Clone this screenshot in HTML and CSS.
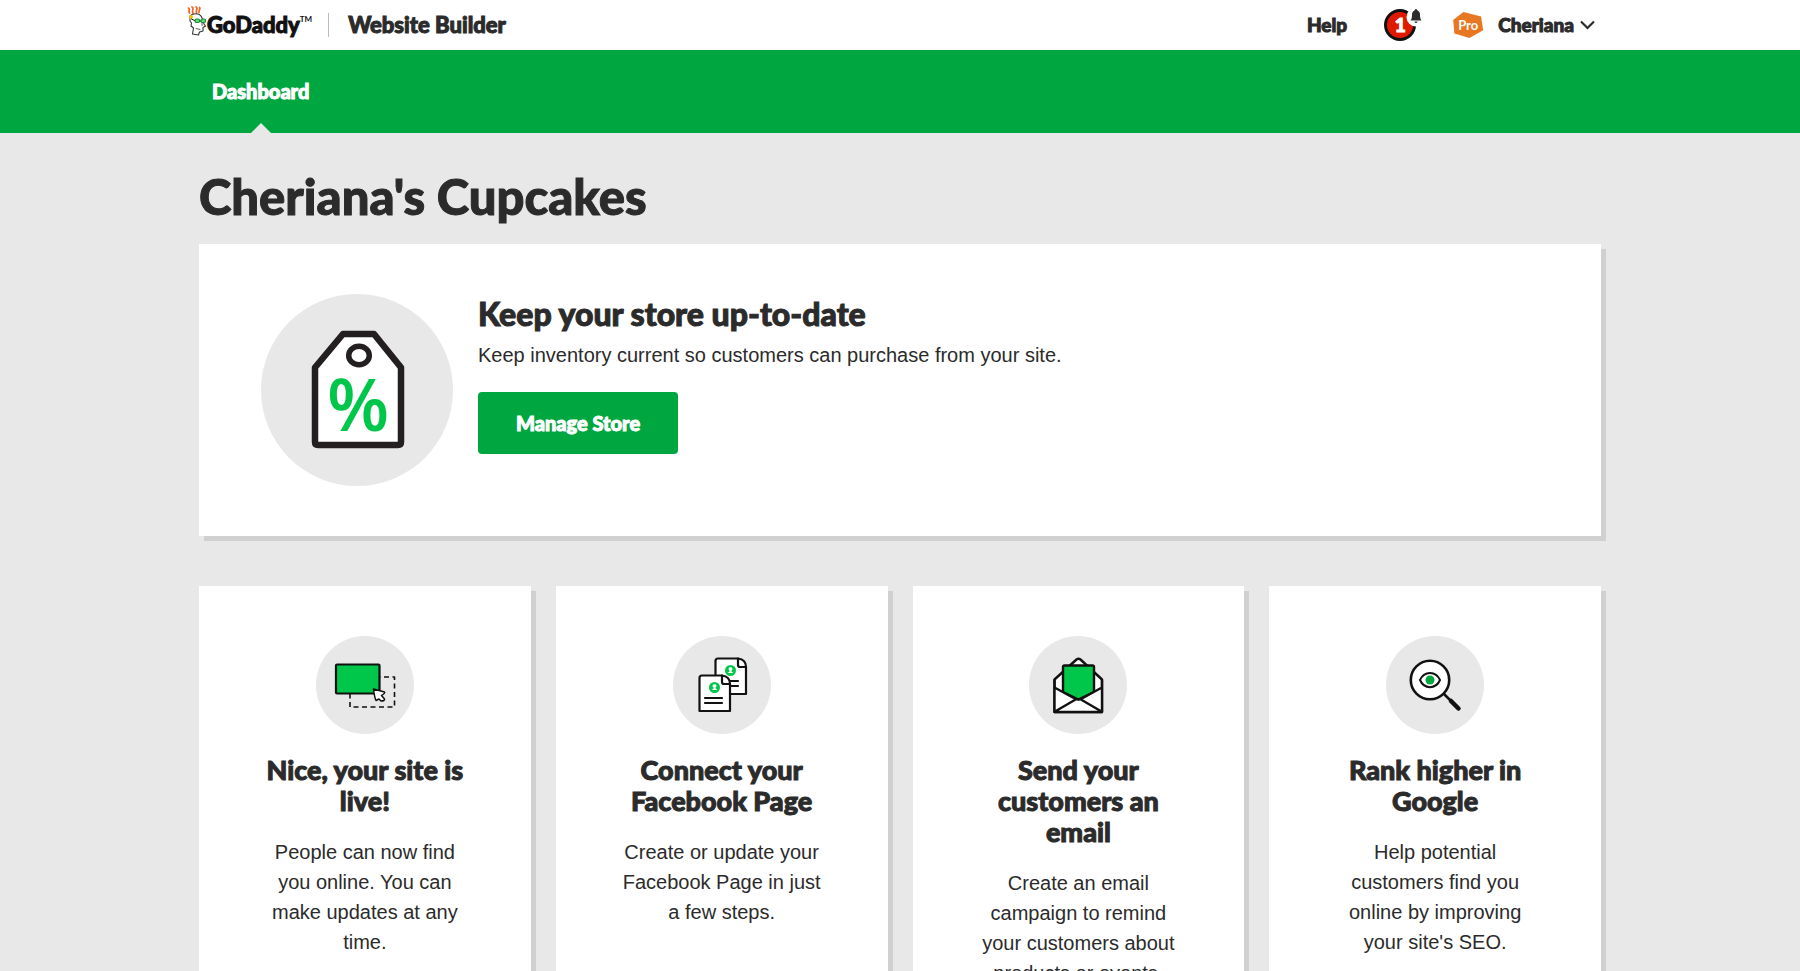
FILE: index.html
```html
<!DOCTYPE html>
<html lang="en">
<head>
    <meta charset="UTF-8">
    <meta name="viewport" content="width=device-width, initial-scale=1.0">
    <title>Website Builder</title>
    <link rel="stylesheet" href="styles.css">
</head>
<body>

<!-- Header -->
<header class="header">
    <div class="header-inner">
        <a class="logo" href="#">
            <svg class="logo-face" width="20" height="30" viewBox="0 0 20 30" fill="none" stroke-linecap="round" stroke-linejoin="round">
                <path d="M1.500 2c2 .5-.5 2.500 1 5M5 1c2.500 1-.5 3 1 6M9 1c2.500 1-.5 3 .5 6M12.500 1.500c1.500 1-1 3-.5 5" stroke="#f26522" stroke-width="1.700"/>
                <path d="M3 10c3-3 9-3 11 0l2 4 1 4 1.500 2-2.500 1.500v3.500l-3.500 1-1 3-6-1 1-6-2.500-2 .5-3-1.500-2z" fill="#fff" stroke="#333" stroke-width="1.100"/>
                <path d="M9 22.500l4 1M15 17v2.500" stroke="#333" stroke-width=".8"/>
                <circle cx="4" cy="11" r="2" fill="#f5c400"/>
                <path d="M4.500 13l4 2M12 15h2" stroke="#111"/>
                <rect x="8" y="13" width="4.500" height="3.500" rx="1.500" fill="#5fe07a" stroke="#178a37" stroke-width="1.200"/>
                <rect x="14" y="13" width="4.500" height="3.500" rx="1.500" fill="#5fe07a" stroke="#178a37" stroke-width="1.200"/>
            </svg>
            <span class="logo-name">GoDaddy</span><span class="logo-tm">TM</span>
        </a>
        <span class="product">Website Builder</span>

        <div class="header-right">
            <a class="header-link" href="#">Help</a>
            <button class="notifications" type="button" aria-label="Notifications">
                <span class="count">1</span>
                <svg class="bell" width="20" height="20" viewBox="0 0 20 20">
                    <circle cx="10" cy="10" r="9.500" fill="#fff"/>
                    <path d="M10 2c1 0 1 1 1.500 1.500 2 .8 2.500 2.500 2.500 4.500 0 3 .5 4 1.500 5.500h-11C5.500 12 6 11 6 8c0-2 .5-3.700 2.500-4.500C9 3 9 2 10 2z" fill="#2b2b2b"/>
                    <path d="M8.500 14.500h3q-.3 1.500-1.500 1.500t-1.500-1.500z" fill="#2b2b2b"/>
                </svg>
            </button>
            <span class="pro">Pro</span>
            <button class="account" type="button">
                Cheriana
                <svg width="15" height="10" viewBox="0 0 15 10"><path d="M1 1.500l6.500 6.500 6.500-6.500" fill="none" stroke="#2b2b2b" stroke-width="2.200"/></svg>
            </button>
        </div>
    </div>
</header>

<!-- Navigation -->
<nav class="nav">
    <div class="nav-inner">
        <a class="nav-link active" href="#">Dashboard</a>
    </div>
</nav>

<main class="main">
    <h1>Cheriana's Cupcakes</h1>

    <!-- Store card -->
    <section class="hero">
        <svg class="hero-icon" width="192" height="192" viewBox="0 0 192 192">
            <circle cx="96" cy="96" r="96" fill="#e8e8e8"/>
            <path d="M82 40h31l27 33.500V148q0 3-3 3H57q-3 0-3-3V73.500z" fill="#fff" stroke="#231f20" stroke-width="6.500" stroke-linejoin="round"/>
            <ellipse cx="98" cy="61.500" rx="10.300" ry="9.300" fill="#fff" stroke="#231f20" stroke-width="5.500"/>
            <text class="percent" x="97" y="137" text-anchor="middle">%</text>
        </svg>
        <div class="hero-text">
            <h2>Keep your store up-to-date</h2>
            <p>Keep inventory current so customers can purchase from your site.</p>
            <button class="btn" type="button">Manage Store</button>
        </div>
    </section>

    <!-- Task cards -->
    <div class="cards">
        <section class="card">
            <svg width="98" height="98" viewBox="0 0 98 98" fill="none" stroke="#111" stroke-width="2.200" stroke-linejoin="round">
                <circle cx="49" cy="49" r="49" fill="#e8e8e8" stroke="none"/>
                <path d="M34 41h44.500v30H34z" stroke-dasharray="5 3.500" stroke-width="1.600"/>
                <rect x="20" y="28.500" width="43.500" height="29" rx="1" fill="#00c64a"/>
                <path d="M57.500 53l11 3q1 1-3 3.500l3 3.500q.5 2-3.500 2l-2-2-3 1.500q-1.500-3-2.500-11.500z" fill="#fff" stroke-width="1.500"/>
            </svg>
            <h3>Nice, your site is live!</h3>
            <p>People can now find you online. You can make updates at any time.</p>
        </section>

        <section class="card">
            <svg width="98" height="98" viewBox="0 0 98 98" fill="none" stroke="#111" stroke-width="2.200" stroke-linejoin="round" stroke-linecap="round">
                <circle cx="49" cy="49" r="49" fill="#e8e8e8" stroke="none"/>
                <g id="page">
                    <path d="M45 22.500h20q8 1 8 8.500v27H42.500V25q0-2.500 2.500-2.500z" fill="#fff"/>
                    <path d="M65 22.500V29q0 2 2 2h6M48 45h17M48 50h17"/>
                    <circle cx="57.500" cy="34.500" r="5.500" fill="#00c64a" stroke="none"/>
                    <path d="M57.500 31.200a1.700 1.700 0 0 1 1 3.200v1l2 1.500h-6l2-1.500v-1a1.700 1.700 0 0 1 1-3.200z" fill="#fff" stroke="none"/>
                </g>
                <use href="#page" x="-16" y="17"/>
            </svg>
            <h3>Connect your Facebook Page</h3>
            <p>Create or update your Facebook Page in just a few steps.</p>
        </section>

        <section class="card">
            <svg width="98" height="98" viewBox="0 0 98 98" fill="none" stroke="#111" stroke-width="2.400" stroke-linejoin="round">
                <circle cx="49" cy="49" r="49" fill="#e8e8e8" stroke="none"/>
                <path d="M25.500 43.500L47.500 23.500q2-1.500 4 0L73 43.500V76H25.500z" fill="#fff"/>
                <path d="M34 31q0-1.500 1.500-1.500h28q1.500 0 1.500 1.500v25l-15.500 7.500L34 56z" fill="#00c64a"/>
                <path d="M25.500 51.500L49.300 66 73 51.500V76H25.500z" fill="#fff" stroke="none"/>
                <path d="M25.500 51.500L47 63.200h4.500L73 51.500M26 75.500l21-12.300M72.500 75.500l-21-12.300M25.500 43.500V76H73V43.500"/>
            </svg>
            <h3>Send your customers an email</h3>
            <p>Create an email campaign to remind your customers about products or events.</p>
        </section>

        <section class="card">
            <svg width="98" height="98" viewBox="0 0 98 98" fill="none" stroke="#111" stroke-width="2" stroke-linecap="round">
                <circle cx="49" cy="49" r="49" fill="#e8e8e8" stroke="none"/>
                <circle cx="44" cy="44" r="19.200" fill="#fff" stroke-width="2.600"/>
                <path d="M34 44c4-9.500 16-9.500 20 0-4 9.500-16 9.500-20 0z"/>
                <circle cx="44" cy="44" r="4.500" fill="#00a63f" stroke="none"/>
                <path d="M58 58l6 6" stroke-width="2.500"/>
                <path d="M65 65l7.500 7.500" stroke-width="4.500"/>
            </svg>
            <h3>Rank higher in Google</h3>
            <p>Help potential customers find you online by improving your site's SEO.</p>
        </section>
    </div>
</main>

</body>
</html>
```
FILE: styles.css
```css
* {
    box-sizing: border-box;
}

body {
    margin: 0;
    background-color: #e8e8e8;
    color: #2b2b2b;
    font-family: "Liberation Sans", Arial, sans-serif;
    font-size: 20px;
    line-height: 30px;
}

h1, h2, h3, p {
    margin: 0;
}

h1, h2, h3, .header, .nav, .btn {
    font-family: Lato, sans-serif;
    font-weight: 900;
    -webkit-text-stroke: 1px currentColor;
}

a {
    color: inherit;
    text-decoration: none;
}

button {
    padding: 0;
    border: none;
    background: none;
    color: inherit;
    font: inherit;
    cursor: pointer;
}

/* Header */
.header {
    background-color: #fff;
}

.header-inner {
    display: flex;
    align-items: center;
    max-width: 1426px;
    height: 50px;
    margin: 0 auto;
    padding-right: 18px;
}

.logo {
    display: flex;
    align-items: center;
    padding-right: 16px;
    border-right: 1px solid #bbb;
    color: #111;
    line-height: 24px;
}

.logo-face {
    margin-top: -8px;
}

.logo-name {
    font-size: 22px;
}

.logo-tm {
    align-self: flex-start;
    font-size: 8px;
    font-weight: 700;
    line-height: 12px;
    -webkit-text-stroke: 0;
}

.product {
    padding-left: 19px;
    font-size: 22px;
}

.header-right {
    display: flex;
    align-items: center;
    margin-left: auto;
    font-size: 19px;
}

.notifications {
    position: relative;
    width: 38px;
    height: 32px;
    margin-left: 37px;
}

.count {
    display: block;
    width: 32px;
    height: 32px;
    border: 3px solid #111;
    border-radius: 50%;
    background-color: #e01a00;
    color: #fff;
    line-height: 26px;
}

.bell {
    position: absolute;
    top: -2px;
    right: -4px;
}

.pro {
    width: 30px;
    height: 26px;
    margin: 0 15px 0 31px;
    background-color: #e87722;
    clip-path: polygon(34% 0, 93% 17%, 100% 70%, 54% 100%, 4% 83%, 0 31%);
    color: #fff;
    font-size: 13px;
    font-weight: 700;
    line-height: 26px;
    text-align: center;
    -webkit-text-stroke: 0;
}

.account {
    display: flex;
    align-items: center;
    gap: 6px;
}

/* Navigation */
.nav {
    background-color: #00a63f;
    color: #fff;
}

.nav-inner {
    display: flex;
    max-width: 1402px;
    margin: 0 auto;
}

.nav-link {
    position: relative;
    padding: 0 13px;
    font-size: 20px;
    line-height: 83px;
}

.nav-link.active::after {
    content: "";
    position: absolute;
    bottom: 0;
    left: 50%;
    margin-left: -10px;
    border: 10px solid transparent;
    border-top: none;
    border-bottom-color: #e8e8e8;
}

/* Content */
.main {
    max-width: 1402px;
    margin: 0 auto;
    padding: 35px 0 50px;
}

h1 {
    margin-bottom: 20px;
    font-size: 49px;
    line-height: 56px;
}

.hero, .card {
    background-color: #fff;
    box-shadow: 5px 5px 0 #d0d0d0;
}

.hero {
    display: flex;
    gap: 25px;
    margin-bottom: 50px;
    padding: 50px 62px;
}

.hero-icon {
    flex: none;
}

.percent {
    fill: #00c64a;
    font-family: "Open Sans", sans-serif;
    font-size: 72px;
    font-weight: 600;
}

.hero h2 {
    margin: 2px 0 8px;
    font-size: 32px;
    line-height: 36px;
}

.btn {
    margin-top: 22px;
    padding: 0 38px;
    border-radius: 4px;
    background-color: #00a63f;
    color: #fff;
    font-size: 20px;
    line-height: 62px;
}

/* Task cards */
.cards {
    display: grid;
    grid-template-columns: repeat(4, 1fr);
    gap: 25px;
}

.card {
    padding: 50px 62px;
    text-align: center;
}

.card svg {
    display: block;
    margin: 0 auto 20px;
}

.card h3 {
    margin-bottom: 21px;
    font-size: 27px;
    line-height: 31px;
}
```
